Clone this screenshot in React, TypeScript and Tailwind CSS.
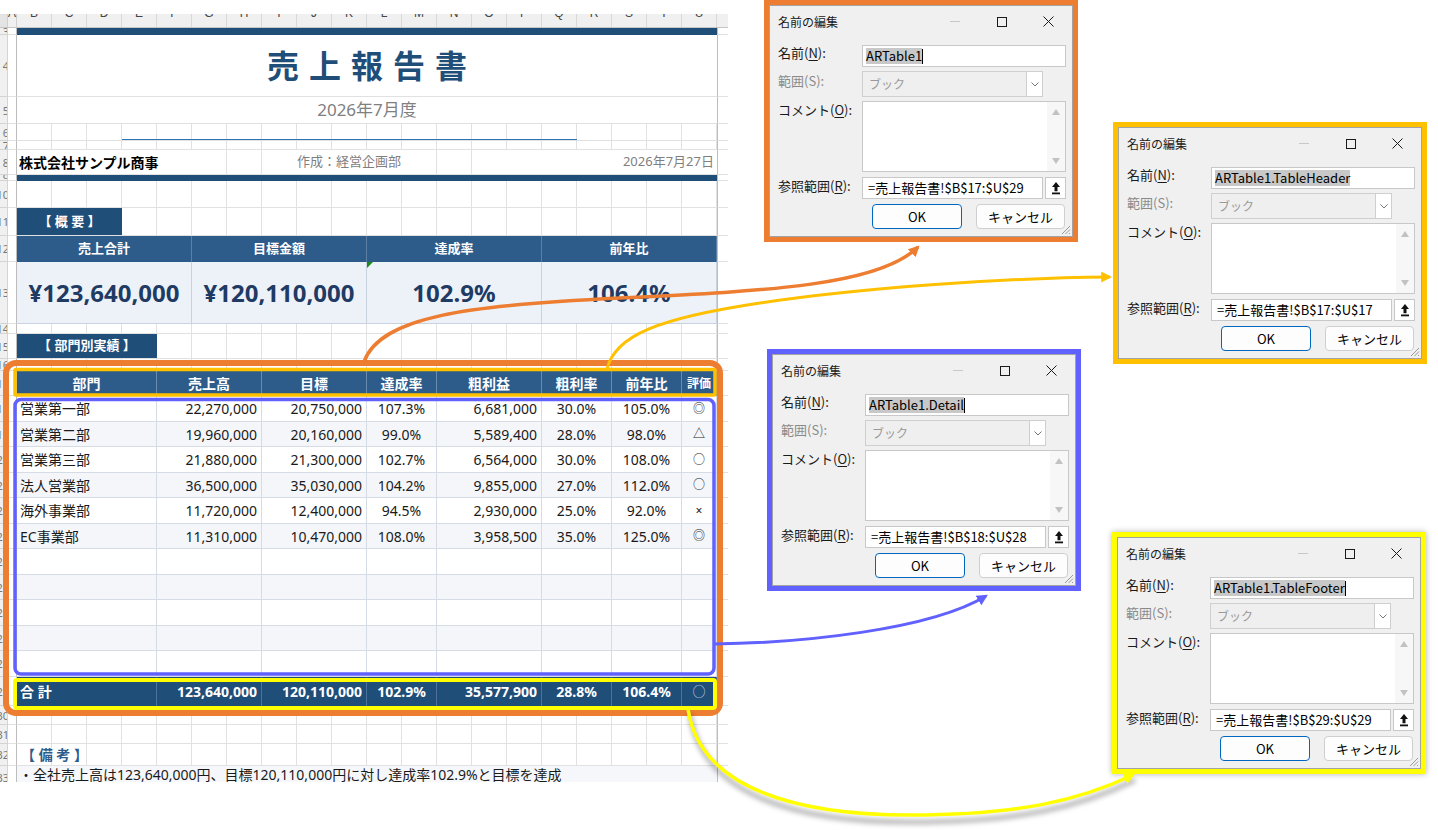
import type { ReactNode } from 'react'

const SHEET_FONT = "font-['Noto_Sans','Noto_Sans_CJK_JP',sans-serif]"
const UI_FONT = "font-['Noto_Sans_CJK_JP','Noto_Sans',sans-serif]"
const GRID =
  '[background-image:linear-gradient(to_left,#e1e1e1_1px,transparent_1px)] [background-size:35px_100%]'

const TCOLS = ['w-[140px]', 'w-[105px]', 'w-[105px]', 'w-[70px]', 'w-[105px]', 'w-[70px]', 'w-[70px]', 'w-[35px]']
const TALIGN = [
  'justify-start pl-[3px]',
  'justify-end pr-[4px]',
  'justify-end pr-[4px]',
  'justify-center',
  'justify-end pr-[4px]',
  'justify-center',
  'justify-center',
  'justify-center',
]
const HEADERS = ['部門', '売上高', '目標', '達成率', '粗利益', '粗利率', '前年比', '評価']

const ROWS = [
  ['営業第一部', '22,270,000', '20,750,000', '107.3%', '6,681,000', '30.0%', '105.0%', '◎'],
  ['営業第二部', '19,960,000', '20,160,000', '99.0%', '5,589,400', '28.0%', '98.0%', '△'],
  ['営業第三部', '21,880,000', '21,300,000', '102.7%', '6,564,000', '30.0%', '108.0%', '○'],
  ['法人営業部', '36,500,000', '35,030,000', '104.2%', '9,855,000', '27.0%', '112.0%', '○'],
  ['海外事業部', '11,720,000', '12,400,000', '94.5%', '2,930,000', '25.0%', '92.0%', '×'],
  ['EC事業部', '11,310,000', '10,470,000', '108.0%', '3,958,500', '35.0%', '125.0%', '◎'],
  ['', '', '', '', '', '', '', ''],
  ['', '', '', '', '', '', '', ''],
  ['', '', '', '', '', '', '', ''],
  ['', '', '', '', '', '', '', ''],
  ['', '', '', '', '', '', '', ''],
]
const ROW_H = ['h-[26px]', 'h-[25px]', 'h-[26px]', 'h-[25px]', 'h-[26px]', 'h-[25px]', 'h-[26px]', 'h-[25px]', 'h-[26px]', 'h-[25px]', 'h-[26px]']
const TOTAL = ['合 計', '123,640,000', '120,110,000', '102.9%', '35,577,900', '28.8%', '106.4%', '○']

const SUMMARY = [
  { label: '売上合計', value: '¥123,640,000' },
  { label: '目標金額', value: '¥120,110,000' },
  { label: '達成率', value: '102.9%' },
  { label: '前年比', value: '106.4%' },
]

function Row({
  h,
  n,
  grid = false,
  line = true,
  inner = '',
  children,
}: {
  h: string
  n: number
  grid?: boolean
  line?: boolean
  inner?: string
  children?: ReactNode
}) {
  return (
    <div className={`flex ${h}`}>
      <div className="w-[8px] shrink-0 flex items-center justify-end overflow-hidden bg-[#f0f0f0] border-r border-b border-[#d4d4d4] text-[11px] leading-none text-[#777]">
        <span className="whitespace-nowrap -mr-[2px]">{n}</span>
      </div>
      <div className="w-[9px] shrink-0 border-b border-r border-b-[#e1e1e1] border-r-[#bdbdbd]" />
      <div
        className={`w-[700px] shrink-0 flex ${line ? 'border-b border-[#e1e1e1]' : ''} ${grid ? GRID : ''} ${inner}`}
      >
        {children}
      </div>
      <div className="w-[11px] shrink-0 border-b border-l border-b-[#e1e1e1] border-l-[#bdbdbd]" />
    </div>
  )
}

function ColumnHeader() {
  const letters = 'BCDEFGHIJKLMNOPQRSTU'.split('')
  return (
    <div className="flex h-[14px] overflow-hidden bg-[#f0f0f0] border-b border-[#c6c6c6] text-[12px] leading-[14px] text-[#444] font-['Liberation_Sans',sans-serif]">
      <div className="w-[8px] shrink-0 bg-[#e4e4e4] border-r border-[#d0d0d0]" />
      <div className="w-[9px] shrink-0 border-r border-[#d0d0d0] text-center">
        <span className="block -translate-y-[8px]">A</span>
      </div>
      {letters.map((l) => (
        <div key={l} className="w-[35px] shrink-0 border-r border-[#d8d8d8] text-center">
          <span className="block -translate-y-[8px]">{l}</span>
        </div>
      ))}
      <div className="w-[11px] shrink-0" />
    </div>
  )
}

function Sheet() {
  return (
    <div className="pt-[14px]">
      <div className={`w-[728px] h-[768px] overflow-hidden bg-white ${SHEET_FONT}`}>
        <ColumnHeader />
        <Row h="h-[7px]" n={3} line={false} inner="bg-[#1f4e79]" />
        <Row h="h-[62px]" n={4} inner="items-center justify-center">
          <span className="pl-[10px] text-[32px] font-bold tracking-[10px] text-[#1f4e79]">売上報告書</span>
        </Row>
        <Row h="h-[27px]" n={5} inner="items-center justify-center">
          <span className="text-[17px] text-[#808080]">2026年7月度</span>
        </Row>
        <Row h="h-[17px]" n={6} grid inner="items-end">
          <div className="ml-[105px] w-[455px] h-px bg-[#2e75b6]" />
        </Row>
        <Row h="h-[9px]" n={7} grid />
        <Row h="h-[25px]" n={8} inner="items-center">
          <div className="w-[210px] h-full flex items-center pl-[2px] border-r border-[#e1e1e1] text-[14px] font-bold text-black">
            株式会社サンプル商事
          </div>
          <div className="w-[35px] h-full border-r border-[#e1e1e1]" />
          <div className="w-[175px] h-full flex items-center justify-center border-r border-[#e1e1e1] text-[13px] text-[#7f7f7f]">
            作成：経営企画部
          </div>
          <div className="w-[35px] h-full border-r border-[#e1e1e1]" />
          <div className="w-[245px] h-full flex items-center justify-end pr-[3px] text-[13px] text-[#7f7f7f]">
            2026年7月27日
          </div>
        </Row>
        <Row h="h-[6px]" n={9} line={false} inner="bg-[#1f4e79]" />
        <Row h="h-[27px]" n={10} grid />
        <Row h="h-[28px]" n={11}>
          <div className="w-[105px] h-full flex items-center justify-center bg-[#1f4e79] text-[13px] font-bold text-white">
            【 概 要 】
          </div>
          <div className={`flex-1 h-full ${GRID}`} />
        </Row>
        <Row h="h-[26px]" n={12} line={false}>
          {SUMMARY.map((s) => (
            <div
              key={s.label}
              className="w-[175px] h-full flex items-center justify-center bg-[#2e5c8a] border-r border-[#5d7fa6] text-[13px] font-bold text-white"
            >
              {s.label}
            </div>
          ))}
        </Row>
        <Row h="h-[62px]" n={13} line={false}>
          {SUMMARY.map((s, i) => (
            <div
              key={s.label}
              className="relative w-[175px] h-full flex items-center justify-center bg-[#edf2f9] border-r border-b border-[#c9d3e0] text-[24px] font-bold text-[#1f3b63]"
            >
              {i === 2 && (
                <svg className="absolute left-0 top-0" width="6" height="6" viewBox="0 0 6 6">
                  <polygon points="0,0 6,0 0,6" fill="#1e8a1e" />
                </svg>
              )}
              {s.value}
            </div>
          ))}
        </Row>
        <Row h="h-[10px]" n={14} grid />
        <Row h="h-[25px]" n={15}>
          <div className="w-[140px] h-full flex items-center justify-center bg-[#1f4e79] text-[13px] font-bold text-white">
            【 部門別実績 】
          </div>
          <div className={`flex-1 h-full ${GRID}`} />
        </Row>
        <Row h="h-[12px]" n={16} grid />
        <Row h="h-[25px]" n={17} line={false}>
          {HEADERS.map((t, i) => (
            <div
              key={t}
              className={`${TCOLS[i]} h-full flex items-center justify-center bg-[#2e5c8a] border-r border-[#6a8bb0] font-bold text-white ${
                i === 7 ? 'text-[12px]' : 'text-[14px]'
              }`}
            >
              {t}
            </div>
          ))}
        </Row>
        {ROWS.map((r, ri) => (
          <Row key={ri} h={ROW_H[ri]} n={18 + ri} line={false} inner={ri % 2 === 1 ? 'bg-[#f4f6fa]' : 'bg-white'}>
            {r.map((c, ci) => (
              <div
                key={ci}
                className={`${TCOLS[ci]} ${TALIGN[ci]} h-full flex items-center border-r border-b border-[#d6dce6] text-[#1a1a1a] ${
                  ci === 7 ? 'text-[12px]' : 'text-[14px]'
                }`}
              >
                {c}
              </div>
            ))}
          </Row>
        ))}
        <Row h="h-[29px]" n={29} line={false} inner="bg-[#1f4e79]">
          {TOTAL.map((c, ci) => (
            <div
              key={ci}
              className={`${TCOLS[ci]} ${TALIGN[ci]} h-full flex items-center border-r border-[#4d729b] ${
                ci === 7 ? 'text-[13px] font-normal text-[#c9d3e0]' : 'text-[14px] font-bold text-white'
              }`}
            >
              {c}
            </div>
          ))}
        </Row>
        <Row h="h-[19px]" n={30} grid />
        <Row h="h-[19px]" n={31} grid />
        <Row h="h-[22px]" n={32} grid inner="items-center">
          <span className="pl-[4px] text-[14px] font-bold text-[#2e5c8a]">【 備 考 】</span>
        </Row>
        <Row h="h-[24px]" n={33} inner="items-start bg-[#f5f7fa]">
          <span className="pl-[2px] pt-[1px] text-[14px] leading-[15px] whitespace-nowrap text-[#1a1a1a]">
            ・全社売上高は123,640,000円、目標120,110,000円に対し達成率102.9%と目標を達成
          </span>
        </Row>
      </div>
    </div>
  )
}

function NameDialog({
  pos,
  name,
  range,
  caret = true,
}: {
  pos: string
  name: string
  range: string
  caret?: boolean
}) {
  return (
    <div className={`absolute w-[314px] h-[242px] border-[5px] ${pos} ${UI_FONT}`}>
      <div className="relative w-full h-full bg-[#f0f0f0] border border-[#a3a3a3] text-[13px] text-[#1a1a1a]">
        <div className="flex items-center h-[31px]">
          <span className="pl-[8px] text-[12px]">名前の編集</span>
          <div className="ml-auto flex h-full">
            <div className="w-[47px] flex items-center justify-center">
              <div className="w-[10px] h-px bg-[#c8c8c8]" />
            </div>
            <div className="w-[47px] flex items-center justify-center">
              <div className="w-[10px] h-[10px] border border-[#1a1a1a]" />
            </div>
            <div className="w-[47px] flex items-center justify-center">
              <svg width="11" height="11" viewBox="0 0 11 11">
                <path d="M0.5 0.5 L10.5 10.5 M10.5 0.5 L0.5 10.5" stroke="#1a1a1a" strokeWidth="1" />
              </svg>
            </div>
          </div>
        </div>

        <div className="pl-[8px]">
          <div className="flex mt-[8px]">
            <div className="w-[84px] leading-[16px]">
              名前(<span className="underline underline-offset-2">N</span>):
            </div>
            <div className="w-[204px] h-[22px] flex items-center pl-[3px] bg-white border border-[#c8c8c8]">
              <span className="bg-[#c8c8c8] leading-[16px] text-black">{name}</span>
              {caret && <span className="w-px h-[15px] bg-black" />}
            </div>
          </div>

          <div className="flex mt-[4px]">
            <div className="w-[84px] pt-[2px] leading-[16px] text-[#8a8a8a]">範囲(S):</div>
            <div className="w-[181px] h-[26px] flex items-center bg-[#efefef] border border-[#cfcfcf]">
              <span className="flex-1 pl-[6px] text-[12px] text-[#9a9a9a]">ブック</span>
              <div className="w-[16px] h-[24px] flex items-center justify-center bg-white border-l border-[#cfcfcf]">
                <svg width="8" height="5" viewBox="0 0 8 5">
                  <path d="M0.5 0.5 L4 4 L7.5 0.5" stroke="#777" strokeWidth="1" fill="none" />
                </svg>
              </div>
            </div>
          </div>

          <div className="flex mt-[4px]">
            <div className="w-[84px] pt-[1px] leading-[16px]">
              コメント(<span className="underline underline-offset-2">O</span>):
            </div>
            <div className="w-[204px] h-[71px] flex bg-white border border-[#c8c8c8]">
              <div className="flex-1" />
              <div className="w-[18px] h-full flex flex-col items-center justify-between py-[7px] bg-[#f7f7f7]">
                <svg width="8" height="6" viewBox="0 0 8 6">
                  <polygon points="4,0 8,6 0,6" fill="#c2c2c2" />
                </svg>
                <svg width="8" height="6" viewBox="0 0 8 6">
                  <polygon points="0,0 8,0 4,6" fill="#c2c2c2" />
                </svg>
              </div>
            </div>
          </div>

          <div className="flex mt-[5px]">
            <div className="w-[84px] leading-[16px] pt-[1px]">
              参照範囲(<span className="underline underline-offset-2">R</span>):
            </div>
            <div className="w-[181px] h-[22px] flex items-center pl-[5px] bg-white border border-[#c8c8c8] text-black">
              {range}
            </div>
            <div className="ml-[2px] w-[21px] h-[22px] flex items-center justify-center bg-white border border-[#c8c8c8]">
              <svg width="10" height="14" viewBox="0 0 10 14">
                <path d="M5 1 L9 6 H6.5 V10.3 H3.5 V6 H1 Z" fill="#111" />
                <rect x="1" y="11.5" width="8" height="1.8" fill="#111" />
              </svg>
            </div>
          </div>

          <div className="flex mt-[5px] pl-[94px] gap-[14px]">
            <div className="w-[90px] h-[25px] flex items-center justify-center rounded-[4px] bg-[#fdfdfd] border border-[#0067c0] text-black">
              OK
            </div>
            <div className="w-[89px] h-[25px] flex items-center justify-center rounded-[4px] bg-[#fdfdfd] border border-[#cfcfcf] text-black">
              キャンセル
            </div>
          </div>
        </div>

        <svg className="absolute right-[1px] bottom-[1px]" width="10" height="10" viewBox="0 0 10 10">
          <path d="M9 1 L1 9 M9 4.5 L4.5 9 M9 8 L8 9" stroke="#9a9a9a" strokeWidth="1" />
        </svg>
      </div>
    </div>
  )
}

function Annotations() {
  return (
    <svg className="absolute left-0 top-0 pointer-events-none" width="1438" height="830" viewBox="0 0 1438 830">
      <defs>
        <marker id="ah-orange" viewBox="0 0 10 10" refX="8" refY="5" markerWidth="11" markerHeight="11" markerUnits="userSpaceOnUse" orient="auto">
          <path d="M0,0 L10,5 L0,10 z" fill="#ed7d31" />
        </marker>
        <marker id="ah-amber" viewBox="0 0 10 10" refX="8" refY="5" markerWidth="11" markerHeight="11" markerUnits="userSpaceOnUse" orient="auto">
          <path d="M0,0 L10,5 L0,10 z" fill="#ffc000" />
        </marker>
        <marker id="ah-blue" viewBox="0 0 10 10" refX="8" refY="5" markerWidth="11" markerHeight="11" markerUnits="userSpaceOnUse" orient="auto">
          <path d="M0,0 L10,5 L0,10 z" fill="#6161ff" />
        </marker>
        <marker id="ah-yellow" viewBox="0 0 10 10" refX="8" refY="5" markerWidth="11" markerHeight="11" markerUnits="userSpaceOnUse" orient="auto">
          <path d="M0,0 L10,5 L0,10 z" fill="#ffff00" />
        </marker>
        <filter id="soft" x="-10%" y="-30%" width="120%" height="160%">
          <feGaussianBlur stdDeviation="2.5" />
        </filter>
      </defs>

      {/* range frames */}
      <rect x="6" y="363" width="714" height="350" rx="10" fill="none" stroke="#ed7d31" strokeWidth="6" />
      <rect x="15" y="369.5" width="700" height="25.5" rx="1" fill="none" stroke="#ffc000" strokeWidth="3.5" />
      <rect x="15" y="399.5" width="699" height="274.5" rx="6" fill="none" stroke="#6161ff" strokeWidth="3.5" />
      <rect x="15" y="680" width="700" height="28" rx="2" fill="none" stroke="#ffff00" strokeWidth="4" />

      {/* connectors */}
      <path
        d="M364,362 C380,316 470,305 620,298 S880,285 918,247"
        fill="none"
        stroke="#ed7d31"
        strokeWidth="3.5"
        markerEnd="url(#ah-orange)"
      />
      <path
        d="M607,369 C615,335 660,318 760,303 S1000,278 1110,277"
        fill="none"
        stroke="#ffc000"
        strokeWidth="3"
        markerEnd="url(#ah-amber)"
      />
      <path
        d="M714,644 C800,643 930,630 986,596"
        fill="none"
        stroke="#6161ff"
        strokeWidth="3"
        markerEnd="url(#ah-blue)"
      />
      <path
        d="M690,714 C702,797 800,822 910,822 S1080,807 1135,780"
        fill="none"
        stroke="rgba(0,0,0,0.28)"
        strokeWidth="5"
        filter="url(#soft)"
      />
      <path
        d="M688,709 C700,790 800,815 910,815 S1080,800 1133,775"
        fill="none"
        stroke="#ffff00"
        strokeWidth="3.5"
        markerEnd="url(#ah-yellow)"
      />
    </svg>
  )
}

export default function App() {
  return (
    <div className="relative w-[1438px] h-[830px] overflow-hidden bg-white">
      <Sheet />
      <NameDialog pos="left-[764px] top-0 border-[#ed7d31]" name="ARTable1" range="=売上報告書!$B$17:$U$29" />
      <NameDialog
        pos="left-[1113px] top-[122px] border-[#ffc000]"
        name="ARTable1.TableHeader"
        range="=売上報告書!$B$17:$U$17"
        caret={false}
      />
      <NameDialog pos="left-[767px] top-[349px] border-[#6161ff]" name="ARTable1.Detail" range="=売上報告書!$B$18:$U$28" />
      <NameDialog
        pos="left-[1112px] top-[532px] border-[#ffff00] shadow-[0_0_6px_rgba(0,0,0,0.3)]"
        name="ARTable1.TableFooter"
        range="=売上報告書!$B$29:$U$29"
      />
      <Annotations />
    </div>
  )
}
